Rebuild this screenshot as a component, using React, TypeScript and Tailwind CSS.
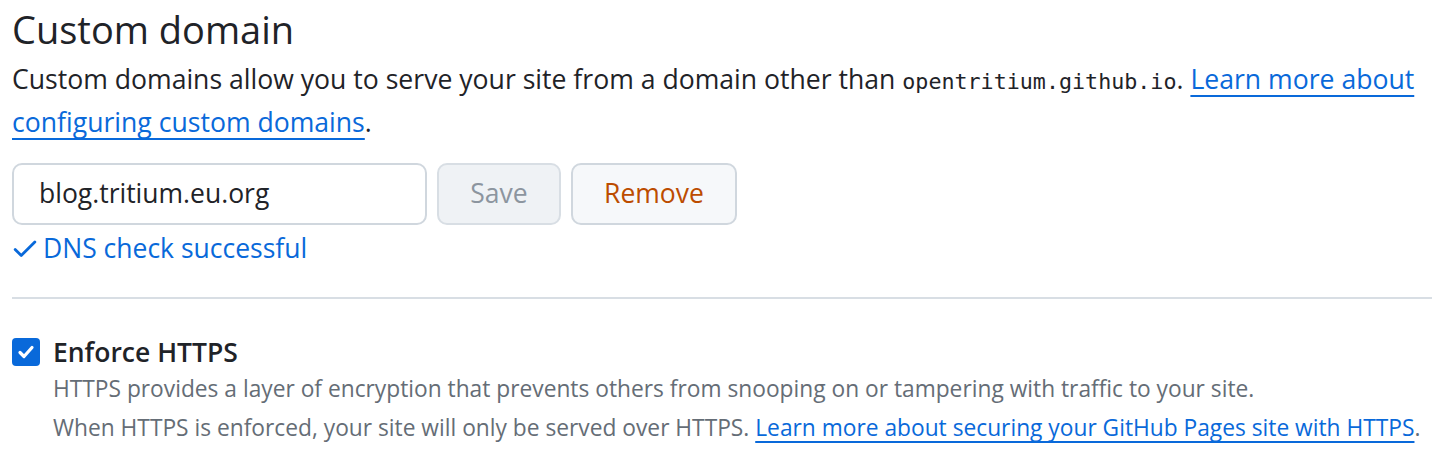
import React from "react";

const checkPath = "M13.78 4.22a.75.75 0 0 1 0 1.06l-7.25 7.25a.75.75 0 0 1-1.06 0L2.22 9.28a.751.751 0 0 1 .018-1.042.751.751 0 0 1 1.042-.018L6 10.94l6.72-6.72a.75.75 0 0 1 1.06 0Z";

export default function App() {
  return (
    <div className="w-[1432px] h-[461px] bg-white pl-[12px] overflow-hidden text-[#1f2328]" style={{ fontFamily: '"Open Sans", "Noto Sans", sans-serif' }}>
      <h2 className="text-[38px] leading-[58px] font-normal">Custom domain</h2>
      <p className="text-[26.6px] leading-[43px] w-[1420px]">
        Custom domains allow you to serve your site from a domain other than{" "}
        <code className="text-[21.7px] leading-none" style={{ fontFamily: '"DejaVu Sans Mono", monospace' }}>opentritium.github.io</code>.{" "}
        <a className="text-[#0969da] underline underline-offset-[6px] decoration-[2px]" href="#">Learn more about configuring custom domains</a>.
      </p>
      <div className="flex gap-[10px] mt-[19px]">
        <div className="w-[415px] h-[62px] border-2 border-[#d0d7de] rounded-[10px] flex items-center pl-[25px] text-[26.5px]">blog.tritium.eu.org</div>
        <button className="w-[124px] h-[62px] border-2 border-[#d8dee4] bg-[#eff2f5] rounded-[10px] text-[26.5px] text-[#8c959f]">Save</button>
        <button className="w-[166px] h-[62px] border-2 border-[#d0d7de] bg-[#f6f8fa] rounded-[10px] text-[26.5px] text-[#bc4c00]">Remove</button>
      </div>
      <div className="flex items-center text-[#0969da] text-[26.5px] leading-[46px]">
        <svg width="30" height="30" viewBox="0 0 16 16" fill="currentColor" className="mr-[3px] -ml-[2px]"><path d={checkPath} /></svg>
        DNS check successful
      </div>
      <div className="h-[2px] bg-[#d8dee4] mt-[26px]" />
      <div className="flex mt-[39px]">
        <div className="w-[28px] h-[28px] bg-[#0969da] rounded-[4px] flex items-center justify-center">
          <svg width="18" height="18" viewBox="0 0 18 18" fill="none" stroke="white" strokeWidth="3.2" strokeLinecap="round" strokeLinejoin="round"><path d="M3 9.5 L7 13.5 L15 4.5" /></svg>
        </div>
        <div className="ml-[13px]">
          <div className="text-[26.5px] font-semibold leading-[28px]">Enforce HTTPS</div>
          <div className="text-[22.75px] leading-[39px] text-[#656d76] mt-[3px]">
            HTTPS provides a layer of encryption that prevents others from snooping on or tampering with traffic to your site.
            <br />
            When HTTPS is enforced, your site will only be served over HTTPS.{" "}
            <a className="text-[#0969da] underline underline-offset-[5px] decoration-[2px]" href="#">Learn more about securing your GitHub Pages site with HTTPS</a>.
          </div>
        </div>
      </div>
    </div>
  );
}
